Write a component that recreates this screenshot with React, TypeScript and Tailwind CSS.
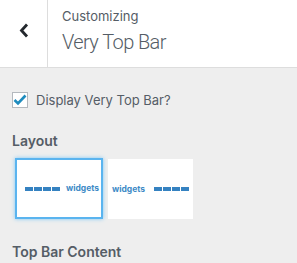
import React from "react"

function Dashes() {
  return (
    <div className="flex gap-[1px]">
      <span className="w-[8px] h-[4px] bg-[#3582c1]" />
      <span className="w-[8px] h-[4px] bg-[#3582c1]" />
      <span className="w-[8px] h-[4px] bg-[#3582c1]" />
      <span className="w-[8px] h-[4px] bg-[#3582c1]" />
    </div>
  )
}

function Widgets() {
  return <span className="text-[8.5px] leading-none font-bold text-[#3d8ac6]">widgets</span>
}

export default function App() {
  return (
    <div className="w-[297px] h-[263px] overflow-hidden bg-[#eeeeee] font-['Inter',sans-serif] text-[#555d66]">
      <div className="flex h-[68px] bg-white border-b border-[#dddddd]">
        <div className="w-[48px] border-r border-[#dddddd] flex justify-center pt-[23px]">
          <svg width="10" height="15" viewBox="0 0 10 15">
            <polyline points="8,1.5 2.5,7.5 8,13.5" fill="none" stroke="#23282d" strokeWidth="2.8" />
          </svg>
        </div>
        <div className="pl-[14px] pt-[8px]">
          <div className="text-[13px] leading-[16px]">Customizing</div>
          <h3 className="font-['Roboto',sans-serif] text-[20px] leading-[28px] font-light tracking-[-0.6px] mt-[4px] text-[#555d66]">Very Top Bar</h3>
        </div>
      </div>

      <div className="px-3 pt-[23px]">
        <label className="flex items-center gap-[8px]">
          <span className="w-[16px] h-[16px] bg-white border border-[#b4b9be] flex items-center justify-center">
            <svg width="14" height="12" viewBox="0 0 14 12">
              <polyline points="1.5,6 5,9.5 12.5,1.5" fill="none" stroke="#1e8cbe" strokeWidth="2.6" />
            </svg>
          </span>
          <span className="text-[13px] leading-[18px]">Display Very Top Bar?</span>
        </label>

        <div className="mt-[23px] text-[14px] leading-[18px] font-semibold">Layout</div>

        <div className="flex gap-[5px] mt-[8px] pl-[3px]">
          <div className="w-[88px] h-[61px] bg-white border-2 border-[#5ab4ef] shadow-[0_0_4px_#7cc7f5] flex items-center justify-center gap-[6px] pl-[6px]">
            <Dashes />
            <Widgets />
          </div>
          <div className="w-[85px] h-[60px] mt-[1px] bg-white flex items-center justify-center gap-[9px]">
            <Widgets />
            <Dashes />
          </div>
        </div>

        <div className="mt-[24px] text-[14px] leading-[18px] font-semibold">Top Bar Content</div>
      </div>
    </div>
  )
}
